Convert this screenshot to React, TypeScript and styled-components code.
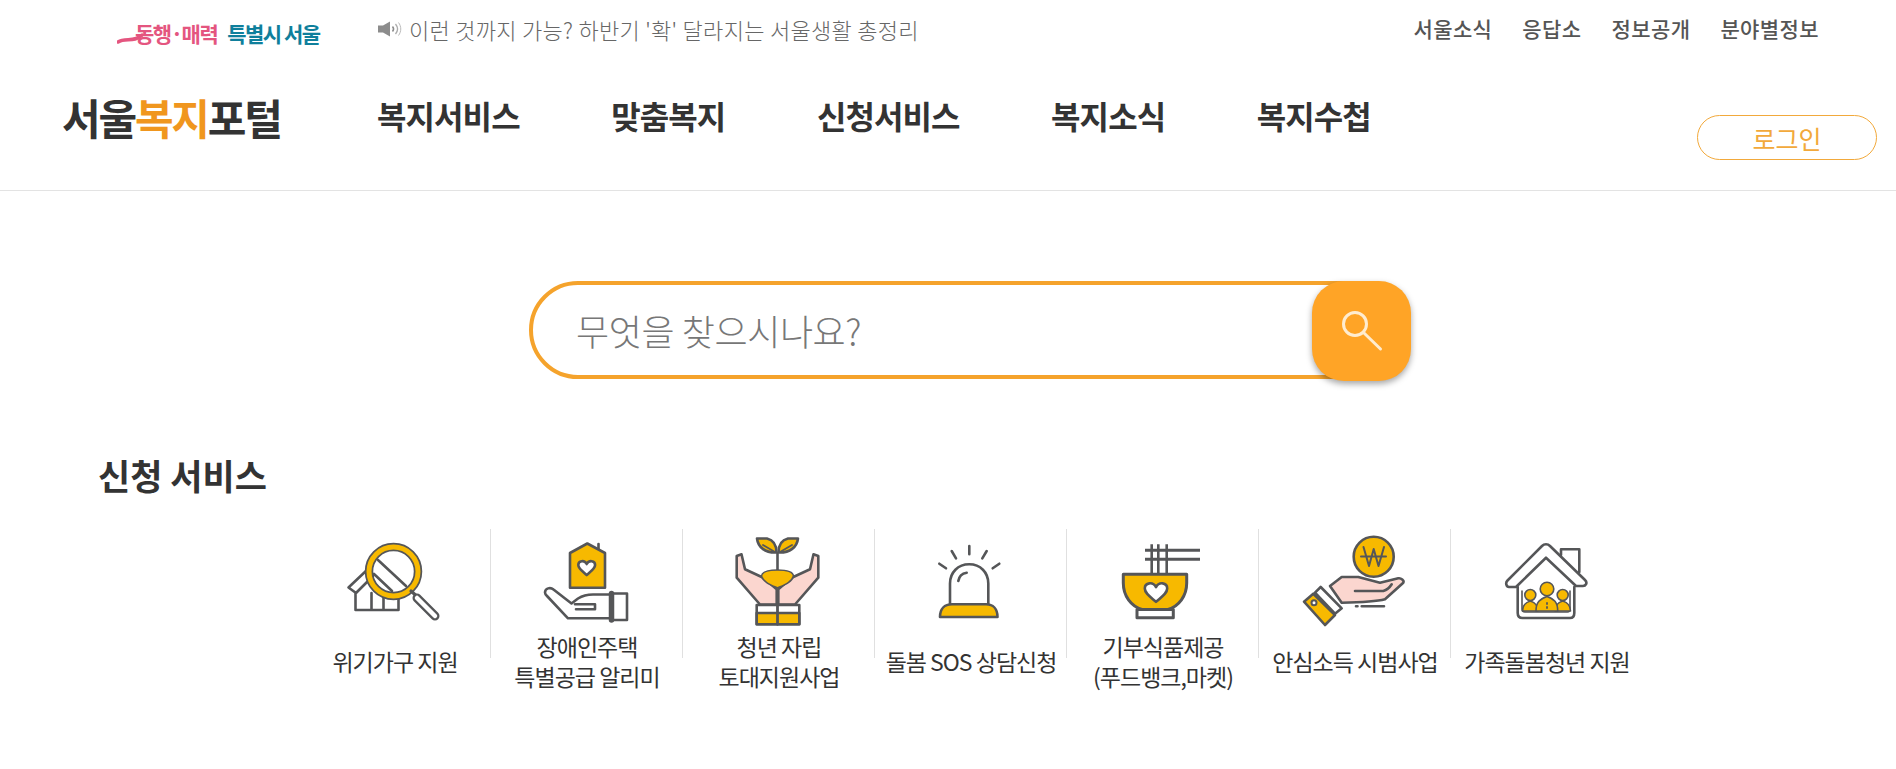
import React from "react";
import styled, { createGlobalStyle } from "styled-components";

const DARK = "#555658";
const YELLOW = "#f7b900";
const PINK = "#fbd6cf";

const GlobalStyle = createGlobalStyle`
  * {
    box-sizing: border-box;
  }

  body {
    margin: 0;
    background: #fff;
    font-family: "Noto Sans CJK KR", "Noto Sans", sans-serif;
    color: #333;
  }
`;

const IconSvg = ({ children }: { children: React.ReactNode }) => (
  <svg
    width="100"
    height="100"
    viewBox="0 0 100 100"
    fill="none"
    stroke={DARK}
    strokeWidth="2.6"
    strokeLinejoin="round"
    strokeLinecap="round"
    style={{ overflow: "visible" }}
  >
    {children}
  </svg>
);

const heart = (cx: number, cy: number, s: number) =>
  `M${cx} ${cy + 7 * s}C${cx - 4 * s} ${cy + 3.5 * s} ${cx - 8 * s} ${cy + 1 * s} ${cx - 8 * s} ${cy - 2.5 * s}C${cx - 8 * s} ${cy - 7 * s} ${cx - 2 * s} ${cy - 7.5 * s} ${cx} ${cy - 3.5 * s}C${cx + 2 * s} ${cy - 7.5 * s} ${cx + 8 * s} ${cy - 7 * s} ${cx + 8 * s} ${cy - 2.5 * s}C${cx + 8 * s} ${cy + 1 * s} ${cx + 4 * s} ${cy + 3.5 * s} ${cx} ${cy + 7 * s}Z`;

const CrisisIcon = () => (
  <IconSvg>
    <path d="M3.5 54.5 22 37l6 6-17 17zM10.5 60v17h43V62M26.5 60v17M38.5 60v17" />
    <path d="M33 27 61 53M29 41l18 17" />
    <circle cx="48.5" cy="38.5" r="24.5" stroke={DARK} strokeWidth="8.5" />
    <circle cx="48.5" cy="38.5" r="24.5" stroke={YELLOW} strokeWidth="5" />
    <path d="M66 58l5 4.5" strokeWidth="3.2" />
    <path d="M72 65 90 83" strokeWidth="9" />
    <path d="M72 65 90 83" stroke="#fff" strokeWidth="4.5" />
  </IconSvg>
);

const HousingIcon = () => (
  <IconSvg>
    <path d="M61.5 11v5" />
    <path d="M33 20 50.3 10.5 68 20v34.7H33z" fill={YELLOW} />
    <path d={heart(49.7, 34.7, 1.05)} fill="#fff" />
    <path d="M73 61.5H56c-6 0-11 1.5-15 4l-6.5 5L16.500 56.500c-3-2.500-8.500-1.500-8.500 3 0 1.500 1 2.500 2 3.500L31 85.300h42" />
    <path d="M38 71.300H58v5H39" />
    <path d="M74.500 60.500H90V87H74.500z" />
    <path d="M74.500 60.500V87" strokeWidth="5.500" />
  </IconSvg>
);

const YouthIcon = () => (
  <IconSvg>
    <path d="M48.500 38V20" />
    <path d="M47.500 19.500C36 20 29 14 28 5.500H38C44 7 47.500 12 47.500 19.500Z" fill={YELLOW} />
    <path d="M49.500 19.500C61 20 68 14 69 5.500H59C53 7 49.500 12 49.500 19.500Z" fill={YELLOW} />
    <path d="M34 12 46 19M63 12 51 19" strokeWidth="1.800" />
    <path d="M7.700 23 12.500 21.300 16 36.300 34.300 44.700 47.700 56.300V71.500H31L7.700 44.700Z" fill={PINK} />
    <path d="M89.300 23 84.500 21.300 81 36.300 62.700 44.700 49.300 56.300V71.500H66L89.300 44.700Z" fill={PINK} />
    <path d="M32.500 43C33 39 40 37 48.500 37S64 39 64.500 43C63 49 55 52 48.500 55 42 52 34 49 32.500 43Z" fill={YELLOW} strokeWidth="1.600" />
    <path d="M27.700 72H70.300V91.300H27.700Z" fill="#fff" />
    <path d="M27.700 80H70.300V91.300H27.700Z" fill={YELLOW} />
    <path d="M48.500 72V91.300" strokeWidth="2.800" />
  </IconSvg>
);

const SosIcon = () => (
  <IconSvg>
    <path d="M29 71.300V50.500C29 39.500 37 31.300 48.200 31.300S67.300 39.500 67.300 50.500V71.300" />
    <path d="M37.300 48C38 43.500 41 40.500 45.700 39.700" />
    <path d="M19 84C19 76 23.500 71.300 31 71.300H65C72 71.300 76.500 76 76.500 84Z" fill={YELLOW} />
    <path d="M48.300 13V21.300M30.700 18 35 25.300M65.700 18 61.300 25.300M18.300 30.700 25 35.300M78.300 30.700 71.700 35.300" />
  </IconSvg>
);

const FoodIcon = () => (
  <IconSvg>
    <path d="M32 17.300H87M32 26.300H87" strokeWidth="3" strokeLinecap="butt" />
    <path d="M38.700 11.300V41M45.300 11.300V41M53.700 11.300V41" strokeLinecap="butt" />
    <path d="M24 76.500H60.300V84.700H24Z" fill="#fff" strokeWidth="3" />
    <path d="M10.300 41.300H73.700V50C73.700 63 66 73 55 76.500H29C18 73 10.300 63 10.300 50Z" fill={YELLOW} strokeWidth="3" />
    <path d={heart(43, 59, 1.4)} fill="#fff" />
  </IconSvg>
);

const IncomeIcon = () => (
  <IconSvg>
    <circle cx="68.700" cy="23.700" r="20" fill={YELLOW} />
    <path d="M56 23.500H81M58.500 14 64 33 68.700 16 73.500 33 79 14" strokeWidth="2" />
    <path d="M25 53 36.700 44H53.300L75 49.700 93.300 45.300C96 44.800 99.500 47.500 98.300 49.700L80 66.300C70 69 50 69.500 36.700 69.700Z" fill={PINK} />
    <path d="M50 58H78.300C82 57 85 54 86.700 51.300" />
    <path d="M15.700 54 36.700 75.300 30 80.700 10 59.700Z" fill="#fff" />
    <path d="M-1 68.700 8.300 60.700 30 82 20 92Z" fill={YELLOW} />
    <circle cx="9" cy="69.700" r="2.500" fill="#fff" strokeWidth="2" />
    <path d="M51 73.300H52.500M56.700 73.300H79" />
  </IconSvg>
);

const FamilyIcon = () => (
  <IconSvg>
    <path d="M64 22V16.300H82.300V39" />
    <path d="M49 11.300C51 11.300 52 12 53 13L88 47C91 50 88.500 53 86 53H79L49 24.700 19 54H12C9.500 54 8 50 10.500 47.500L45 13C46 12 47 11.300 49 11.300Z" fill="#fff" />
    <path d="M20.700 54V80C20.700 83 22.500 85 25.500 85H73C76 85 77.300 83 77.300 80V54" />
    <path d="M25 58V76C25 78 26 79 28 79H70.500C72.500 79 73 78 73 76V58" strokeWidth="1.600" />
    <circle cx="33.300" cy="62" r="5.500" fill={YELLOW} strokeWidth="1.600" />
    <path d="M25.500 78C25.500 71.500 29 69.500 33.300 68 37.500 69.500 41 71.500 41 78Z" fill={YELLOW} strokeWidth="1.600" />
    <circle cx="65.700" cy="62" r="5.500" fill={YELLOW} strokeWidth="1.600" />
    <path d="M58 78C58 71.500 61.500 69.500 65.700 68 70 69.500 73.500 71.500 73.500 78Z" fill={YELLOW} strokeWidth="1.600" />
    <circle cx="50" cy="56" r="6.800" fill={YELLOW} strokeWidth="1.600" />
    <path d="M39 78C39 69 43 66 50 63.500 57 66 60.700 69 60.700 78Z" fill={YELLOW} strokeWidth="1.600" />
    <path d="M50 70V71M50 74V75" strokeWidth="1.800" />
  </IconSvg>
);

const SpeakerIcon = () => (
  <svg width="24" height="16" viewBox="0 0 24 16">
    <path d="M0 4.500H5L12 0.500V15.500L5 11.500H0Z" fill="#8c8c8c" />
    <path d="M14.500 5.500C15.800 7 15.800 9 14.500 10.500" stroke="#8c8c8c" strokeWidth="1.500" fill="none" />
    <path d="M17.500 3C20 6 20 10 17.500 13" stroke="#aaa" strokeWidth="1.300" fill="none" />
    <path d="M20.500 1.500C23.500 5.500 23.500 10.500 20.500 14.500" stroke="#bbb" strokeWidth="1" fill="none" />
  </svg>
);

const SearchIcon = () => (
  <svg width="46" height="46" viewBox="0 0 46 46" fill="none" stroke="#ffeccf" strokeWidth="3" strokeLinecap="round">
    <circle cx="14" cy="16" r="11.500" />
    <path d="M23 25 39.500 41" />
  </svg>
);

const services = [
  { icon: <CrisisIcon />, lines: ["위기가구 지원"] },
  { icon: <HousingIcon />, lines: ["장애인주택", "특별공급 알리미"] },
  { icon: <YouthIcon />, lines: ["청년 자립", "토대지원사업"] },
  { icon: <SosIcon />, lines: ["돌봄 SOS 상담신청"] },
  { icon: <FoodIcon />, lines: ["기부식품제공", "(푸드뱅크,마켓)"] },
  { icon: <IncomeIcon />, lines: ["안심소득 시범사업"] },
  { icon: <FamilyIcon />, lines: ["가족돌봄청년 지원"] },
];

const App = () => {
  return (
    <Page>
      <GlobalStyle />
      <Header>
        <TopBar>
          <Slogan>
            <SloganPink>
              <Swoosh viewBox="0 0 26 12" width="26" height="12">
                <path d="M1 10C8 5 17 11 25 3" stroke="#e4557f" strokeWidth="3.500" strokeLinecap="round" fill="none" />
              </Swoosh>
              동행·매력
            </SloganPink>
            <SloganTeal>특별시 서울</SloganTeal>
          </Slogan>
          <Notice>
            <SpeakerIcon />
            이런 것까지 가능? 하반기 '확' 달라지는 서울생활 총정리
          </Notice>
          <TopLinks>
            <TopLink>서울소식</TopLink>
            <TopLink>응답소</TopLink>
            <TopLink>정보공개</TopLink>
            <TopLink>분야별정보</TopLink>
          </TopLinks>
        </TopBar>
        <MainBar>
          <Logo>
            서울<LogoAccent>복지</LogoAccent>포털
          </Logo>
          <Nav>
            <NavItem>복지서비스</NavItem>
            <NavItem>맞춤복지</NavItem>
            <NavItem>신청서비스</NavItem>
            <NavItem>복지소식</NavItem>
            <NavItem>복지수첩</NavItem>
          </Nav>
          <LoginButton>로그인</LoginButton>
        </MainBar>
      </Header>

      <SearchRow>
        <SearchInput placeholder="무엇을 찾으시나요?" />
        <SearchButton>
          <SearchIcon />
        </SearchButton>
      </SearchRow>

      <SectionTitle>신청 서비스</SectionTitle>
      <ServiceGrid>
        {services.map((s) => (
          <ServiceCell key={s.lines[0]}>
            <IconBox>{s.icon}</IconBox>
            <ServiceLabel>
              {s.lines.map((line) => (
                <span key={line}>{line}</span>
              ))}
            </ServiceLabel>
          </ServiceCell>
        ))}
      </ServiceGrid>
    </Page>
  );
};

const Page = styled.div`
  min-height: 769px;
  background: #fff;
  overflow: hidden;
`;

const Header = styled.header`
  height: 191px;
  border-bottom: 1px solid #e3e3e3;
`;

const TopBar = styled.div`
  display: flex;
  align-items: center;
  height: 60px;
  padding: 0 77px 0 117px;
`;

const Slogan = styled.div`
  display: flex;
  gap: 10px;
  width: 261px;
  margin-top: 5px;
  font-size: 21px;
  font-weight: 700;
  letter-spacing: -1.5px;
  white-space: nowrap;
`;

const SloganPink = styled.span`
  position: relative;
  padding-left: 18px;
  color: #e4557f;
`;

const Swoosh = styled.svg`
  position: absolute;
  left: 0;
  top: 14px;
`;

const SloganTeal = styled.span`
  color: #0f7f9c;
`;

const Notice = styled.div`
  display: flex;
  align-items: center;
  flex: 1;
  gap: 7px;
  margin-top: -3px;
  font-size: 22px;
  font-weight: 300;
  letter-spacing: 0.3px;
  color: #666;
  white-space: nowrap;
`;

const TopLinks = styled.nav`
  display: flex;
  gap: 30px;
  margin-top: -5px;
`;

const TopLink = styled.a`
  font-size: 21px;
  font-weight: 500;
  letter-spacing: 0.4px;
  color: #555;
`;

const MainBar = styled.div`
  display: flex;
  align-items: flex-start;
  height: 130px;
  padding: 0 19px 0 62px;
`;

const Logo = styled.div`
  width: 315px;
  margin-top: 29px;
  font-size: 42px;
  line-height: 56px;
  font-weight: 700;
  letter-spacing: -2.2px;
  color: #333;
`;

const LogoAccent = styled.span`
  color: #f0961e;
`;

const Nav = styled.nav`
  display: flex;
  gap: 91.5px;
  margin-top: 33px;
`;

const NavItem = styled.a`
  font-size: 32px;
  line-height: 44px;
  font-weight: 700;
  letter-spacing: -0.9px;
  color: #333;
`;

const LoginButton = styled.button`
  width: 180px;
  height: 45px;
  margin: 55px 0 0 auto;
  background: #fff;
  border: 1px solid #f2a93b;
  border-radius: 23px;
  font-family: inherit;
  font-size: 25px;
  font-weight: 400;
  color: #f2a93b;
`;

const SearchRow = styled.div`
  display: flex;
  margin: 90px 0 0 529px;
`;

const SearchInput = styled.input`
  width: 860px;
  height: 98px;
  padding: 0 40px 0 43px;
  border: 4px solid #f5a32c;
  border-radius: 49px;
  outline: none;
  font-family: inherit;
  font-size: 36px;
  font-weight: 300;
  letter-spacing: -0.4px;
  color: #777;

  &::placeholder {
    color: #777;
    opacity: 1;
  }
`;

const SearchButton = styled.button`
  position: relative;
  display: flex;
  align-items: center;
  justify-content: center;
  flex: none;
  width: 99px;
  height: 100px;
  margin-left: -77px;
  padding: 0 0 0 4px;
  background: #ffa426;
  border: none;
  border-radius: 32px;
  box-shadow: 0 3px 6px rgba(0, 0, 0, 0.35);
`;

const SectionTitle = styled.h2`
  margin: 70px 0 0 98px;
  font-size: 35px;
  line-height: 48px;
  font-weight: 700;
  color: #333;
`;

const ServiceGrid = styled.div`
  display: grid;
  grid-template-columns: repeat(7, 192px);
  margin: 30px 0 0 299px;
`;

const ServiceCell = styled.div`
  position: relative;
  display: flex;
  flex-direction: column;
  align-items: center;
  padding-top: 4px;

  &:not(:last-child)::after {
    content: "";
    position: absolute;
    top: 0;
    right: 0;
    width: 1px;
    height: 129px;
    background: #e0e0e0;
  }
`;

const IconBox = styled.div`
  height: 98px;
`;

const ServiceLabel = styled.div`
  display: flex;
  flex-direction: column;
  align-items: center;
  justify-content: center;
  height: 60px;
  font-size: 23px;
  line-height: 30px;
  letter-spacing: -1px;
  color: #333;
  white-space: nowrap;
`;

export default App;
